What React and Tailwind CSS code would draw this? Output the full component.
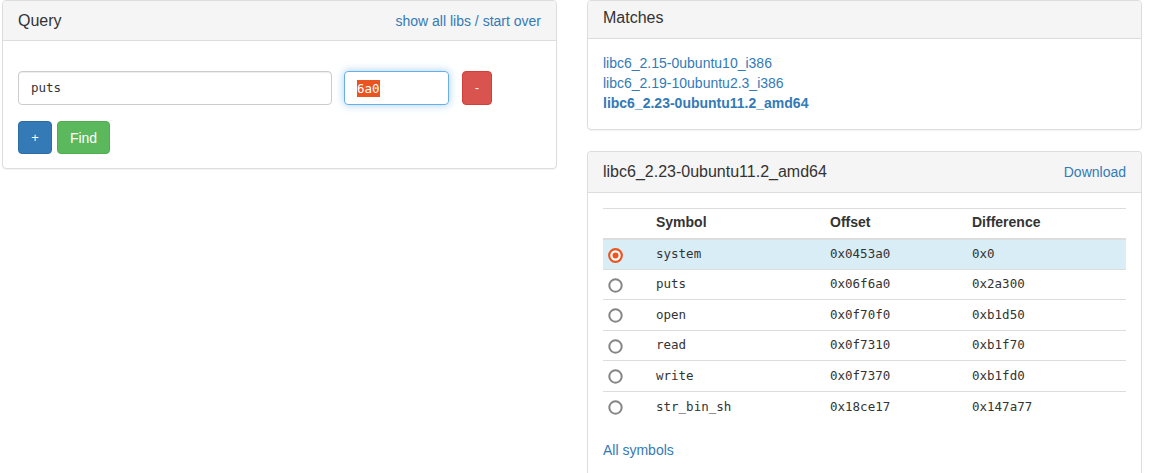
import { useState } from 'react'

const rows = [
  { name: 'system', offset: '0x0453a0', diff: '0x0' },
  { name: 'puts', offset: '0x06f6a0', diff: '0x2a300' },
  { name: 'open', offset: '0x0f70f0', diff: '0xb1d50' },
  { name: 'read', offset: '0x0f7310', diff: '0xb1f70' },
  { name: 'write', offset: '0x0f7370', diff: '0xb1fd0' },
  { name: 'str_bin_sh', offset: '0x18ce17', diff: '0x147a77' },
]

const matches = ['libc6_2.15-0ubuntu10_i386', 'libc6_2.19-10ubuntu2.3_i386', 'libc6_2.23-0ubuntu11.2_amd64']

function Radio({ checked }) {
  return checked ? (
    <svg width="15" height="15" viewBox="0 0 15 15">
      <circle cx="7.5" cy="7.5" r="6.3" fill="#fff" stroke="#e95420" strokeWidth="2.2" />
      <circle cx="7.5" cy="7.5" r="3" fill="#e95420" />
    </svg>
  ) : (
    <svg width="15" height="15" viewBox="0 0 15 15">
      <circle cx="7.5" cy="7.5" r="6.2" fill="#fff" stroke="#858585" strokeWidth="2" />
    </svg>
  )
}

export default function App() {
  const [selected, setSelected] = useState(0)

  return (
    <div className="flex items-start gap-[30px] pl-[2px] pr-[13px] bg-white text-[14px] leading-[20px] text-[#333] font-['Liberation_Sans',Arial,sans-serif]">
      {/* query */}
      <div className="w-[555px] border border-[#ddd] rounded-[4px] shadow-[0_1px_1px_rgba(0,0,0,0.05)]">
        <div className="flex justify-between items-center h-[40px] px-[15px] bg-[#f5f5f5] border-b border-[#ddd] rounded-t-[3px]">
          <span className="text-[16px]">Query</span>
          <a className="text-[#337ab7]">show all libs / start over</a>
        </div>
        <div className="px-[15px] pt-[30px] pb-[14px]">
          <div className="flex items-center">
            <div className="w-[314px] h-[34px] flex items-center px-[12px] border border-[#ccc] rounded-[4px] shadow-[inset_0_1px_1px_rgba(0,0,0,0.075)] font-['DejaVu_Sans_Mono',monospace] text-[12.5px]">
              puts
            </div>
            <div className="ml-[12px] w-[105px] h-[34px] flex items-center px-[12px] border border-[#66afe9] rounded-[4px] shadow-[0_0_8px_rgba(102,175,233,0.6)] font-['DejaVu_Sans_Mono',monospace] text-[12.5px]">
              <span className="bg-[#e95420] text-white leading-[17px]">6a0</span>
            </div>
            <button className="ml-[13px] w-[30px] h-[34px] bg-[#d9534f] border border-[#d43f3a] rounded-[4px] text-white text-[12px]">
              -
            </button>
          </div>
          <div className="flex gap-[5px] mt-[16px]">
            <button className="w-[34px] h-[33px] bg-[#337ab7] border border-[#2e6da4] rounded-[4px] text-white text-[13px]">
              +
            </button>
            <button className="w-[53px] h-[33px] bg-[#5cb85c] border border-[#4cae4c] rounded-[4px] text-white text-[14px]">
              Find
            </button>
          </div>
        </div>
      </div>

      <div className="w-[555px] flex flex-col gap-[21px]">
        {/* matches */}
        <div className="border border-[#ddd] rounded-[4px] shadow-[0_1px_1px_rgba(0,0,0,0.05)]">
          <div className="flex items-center h-[38px] pb-[4px] px-[15px] bg-[#f5f5f5] border-b border-[#ddd] rounded-t-[3px]">
            <span className="text-[16px]">Matches</span>
          </div>
          <div className="px-[15px] pt-[14px] pb-[16px] flex flex-col">
            {matches.map((m, i) => (
              <a key={m} className={`text-[#337ab7] ${i === 2 ? 'font-bold' : ''}`}>
                {m}
              </a>
            ))}
          </div>
        </div>

        {/* selected lib */}
        <div className="border border-[#ddd] border-b-0 rounded-t-[4px] h-[323px]">
          <div className="flex justify-between items-center h-[41px] px-[15px] bg-[#f5f5f5] border-b border-[#ddd] rounded-t-[3px]">
            <span className="text-[16px]">libc6_2.23-0ubuntu11.2_amd64</span>
            <a className="text-[#337ab7]">Download</a>
          </div>
          <div className="px-[15px] pt-[15px]">
            <table className="w-full border-collapse">
              <thead>
                <tr className="border-t border-[#ddd] border-b-2">
                  <th className="w-[48px] h-[30px] px-[5px] pt-0 pb-[2px]"></th>
                  <th className="w-[174px] px-[5px] pt-0 pb-[2px] text-left font-bold">Symbol</th>
                  <th className="w-[142px] px-[5px] pt-0 pb-[2px] text-left font-bold">Offset</th>
                  <th className="px-[5px] pt-0 pb-[2px] text-left font-bold">Difference</th>
                </tr>
              </thead>
              <tbody className="font-['DejaVu_Sans_Mono',monospace] text-[12.5px]">
                {rows.map((r, i) => (
                  <tr
                    key={r.name}
                    onClick={() => setSelected(i)}
                    className={`border-t border-[#ddd] first:border-t-0 ${selected === i ? 'bg-[#d9edf7]' : ''}`}
                  >
                    <td className="h-[30.5px] pl-[5px] py-0 align-middle">
                      <div className="flex items-center pt-[2px]">
                        <Radio checked={selected === i} />
                      </div>
                    </td>
                    <td className="px-[5px] py-0">{r.name}</td>
                    <td className="px-[5px] py-0">{r.offset}</td>
                    <td className="px-[5px] py-0">{r.diff}</td>
                  </tr>
                ))}
              </tbody>
            </table>
            <a className="block mt-[18px] text-[#337ab7]">All symbols</a>
          </div>
        </div>
      </div>
    </div>
  )
}
